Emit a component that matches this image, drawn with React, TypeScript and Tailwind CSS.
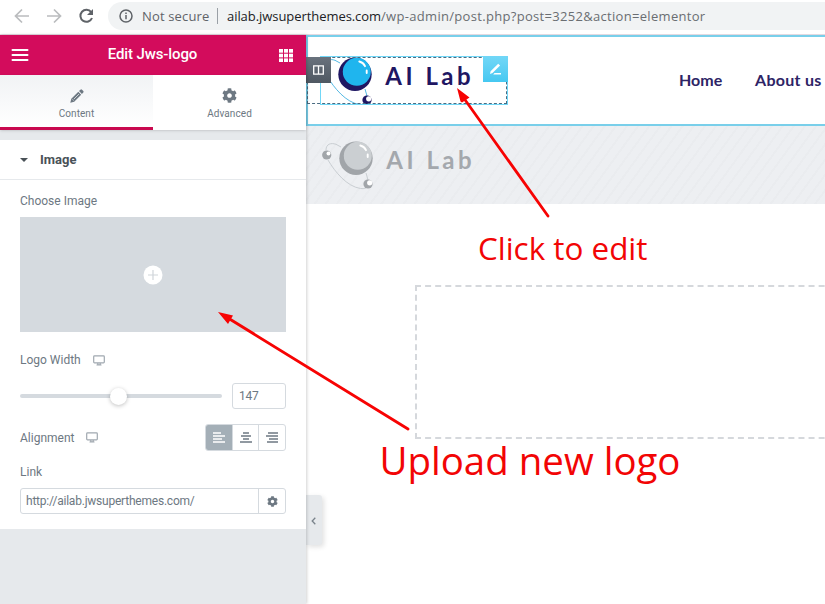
import type { ReactNode } from 'react';

type LogoColors = { dark: string; light: string; line: string; text: string; shine: string };

const brand: LogoColors = { dark: '#1f1763', light: '#1fb5ee', line: '#55b9e3', text: '#1f1763', shine: '#ffffff' };
const muted: LogoColors = { dark: '#a1a5a9', light: '#cbcfd2', line: '#c9ced2', text: '#a4a8ad', shine: '#ffffff' };

function Logo({ c }: { c: LogoColors }) {
  return (
    <svg width="152" height="50" viewBox="0 0 152 50" className="block shrink-0">
      <g fill="none" stroke={c.line} strokeWidth="1">
        <path d="M5 10C5 4 10 2.500 15 4.300L20 7M7 20C14 32 26 46.500 39.500 48.500Q42 49 45 48M45 33L47 40" />
      </g>
      <circle cx="5.700" cy="15" r="4.600" fill={c.dark} />
      <circle cx="7.500" cy="13.500" r="2" fill={c.shine} />
      <circle cx="35" cy="18.300" r="16.700" fill={c.dark} />
      <circle cx="36.800" cy="15.800" r="14" fill={c.light} />
      <path d="M39.300 5.500Q43.300 6.500 45 10.200M46.700 14.500V17" fill="none" stroke={c.shine} strokeWidth="1.900" strokeLinecap="round" />
      <circle cx="47" cy="44" r="4.600" fill={c.dark} />
      <circle cx="48.700" cy="42.800" r="2.600" fill={c.shine} />
      <text x="65.200" y="28.800" textLength="85.500" lengthAdjust="spacing" fontSize="24" fontWeight="700" fill={c.text} fontFamily="Lato, sans-serif">
        AI Lab
      </text>
    </svg>
  );
}

function Monitor() {
  return (
    <svg width="12" height="11" viewBox="0 0 12 11" fill="none" stroke="#a0a8b0" strokeWidth="1.200" className="shrink-0">
      <rect x="0.700" y="0.900" width="10.600" height="7" rx="0.800" />
      <path d="M4.800 8v1.800h2.400V8M3.500 10h5" />
    </svg>
  );
}

function Gear({ size }: { size: number }) {
  return (
    <svg width={size} height={size} viewBox="0 0 512 512" fill="#6d7882">
      <path d="M487.400 315.700l-42.600-24.600c4.300-23.200 4.300-47 0-70.200l42.600-24.600c4.900-2.800 7.100-8.600 5.500-14-11.100-35.600-30-67.800-54.700-94.600-3.800-4.100-10-5.100-14.800-2.300L380.800 110c-17.900-15.400-38.500-27.300-60.800-35.100V25.800c0-5.600-3.900-10.500-9.400-11.700-36.700-8.200-74.300-7.800-109.200 0-5.500 1.200-9.400 6.100-9.400 11.700V75c-22.200 7.900-42.800 19.800-60.800 35.100L88.700 85.500c-4.900-2.800-11-1.900-14.800 2.300-24.700 26.700-43.600 58.900-54.700 94.600-1.700 5.400.6 11.200 5.500 14L67.300 221c-4.300 23.200-4.300 47 0 70.200l-42.600 24.600c-4.900 2.800-7.100 8.600-5.500 14 11.100 35.600 30 67.800 54.700 94.600 3.800 4.100 10 5.100 14.800 2.300l42.600-24.600c17.900 15.400 38.500 27.300 60.800 35.100v49.200c0 5.600 3.900 10.500 9.400 11.700 36.700 8.200 74.300 7.800 109.200 0 5.500-1.200 9.400-6.100 9.400-11.700v-49.200c22.200-7.900 42.800-19.800 60.800-35.100l42.600 24.600c4.900 2.800 11 1.900 14.800-2.300 24.700-26.700 43.600-58.900 54.700-94.600 1.500-5.500-.7-11.300-5.600-14.100zM256 336c-44.100 0-80-35.900-80-80s35.900-80 80-80 80 35.900 80 80-35.900 80-80 80z" />
    </svg>
  );
}

function BrowserBar() {
  return (
    <div className="flex h-[34px] items-start bg-white font-['Open_Sans',sans-serif] text-[13px]">
      <svg width="108" height="34" viewBox="0 0 108 34" fill="none" strokeWidth="1.700" className="shrink-0">
        <path d="M29 16H16M22 9.500L15.500 16L22 22.500M47 16h13M54 9.500L60.500 16L54 22.500" stroke="#babcbe" />
        <path d="M91.200 12.200A6 6 0 1 0 92 18" stroke="#5f6368" strokeWidth="2" />
        <path d="M93 9v6h-6z" fill="#5f6368" />
      </svg>
      <div className="mt-[2px] flex h-[28px] flex-1 items-center rounded-l-full bg-[#f1f3f4] pl-[11px]">
        <svg width="14" height="14" viewBox="0 0 14 14" fill="none" stroke="#5f6368" strokeWidth="1.500" className="shrink-0">
          <circle cx="7" cy="7" r="6" />
          <path d="M7 6v4.300M7 3.500v1.500" />
        </svg>
        <span className="ml-[9px] w-[68px] pt-px whitespace-nowrap tracking-[0.150px] text-[#5f6368]">Not secure</span>
        <span className="ml-[7px] h-4 w-px bg-[#9aa0a6]" />
        <span className="ml-[9px] pt-px whitespace-nowrap tracking-[0.310px] text-[#6a6e72]">
          <span className="tracking-[-0.060px] text-[#202124]">ailab.jwsuperthemes.com</span>/wp-admin/post.php?post=3252&amp;action=elementor
        </span>
      </div>
    </div>
  );
}

function Tab({ label, active, children }: { label: string; active?: boolean; children: ReactNode }) {
  return (
    <div
      className={
        active
          ? 'flex flex-1 flex-col items-center border-b-[3px] border-[#c9094f] bg-gradient-to-b from-[#f1f3f5] to-white pt-[13px]'
          : 'flex flex-1 flex-col items-center border-b-[3px] border-white bg-white pt-[13px]'
      }
    >
      <div className="flex h-[15px] items-center">{children}</div>
      <div className="mt-[4px] text-[10px] leading-[14px] tracking-[0.080px] text-[#6d7882]">{label}</div>
    </div>
  );
}

const alignRows = [
  ['M0 1h8M0 4h12M0 7h9M0 10h12', 'bg-[#a4afb7]', '#ffffff'],
  ['M3 1h6M1 4h10M3 7h6M0 10h12', 'border-l border-[#d5dadf]', '#6d7882'],
  ['M2 1h10M0 4h12M3 7h9M1 10h11', 'border-l border-[#d5dadf]', '#6d7882'],
];

function Panel() {
  return (
    <aside className="z-10 flex w-[306px] shrink-0 flex-col bg-[#e6e9ec] font-[Roboto,sans-serif] text-[12px] text-[#6d7882] shadow-[1px_0_3px_rgba(0,0,0,0.18)]">
      <header className="flex h-10 items-center justify-between bg-[#d30c5c] pl-[11px] pr-[13px] text-white">
        <svg width="18" height="12" viewBox="0 0 18 12" stroke="#ffffff" strokeWidth="2" strokeLinecap="round">
          <path d="M1.500 1h15M1.500 6h15M1.500 11h15" />
        </svg>
        <h1 className="mr-[3px] pb-px text-[15px] font-medium tracking-[-0.120px]">Edit Jws-logo</h1>
        <svg width="14" height="13" viewBox="0 0 14 13" fill="#ffffff">
          {[0, 5, 10].map((y) => [0, 5, 10].map((x) => <rect key={`${x}-${y}`} x={x} y={y * 0.940} width="4" height="3.700" />))}
        </svg>
      </header>
      <div className="flex h-[55px] shadow-sm">
        <Tab label="Content" active>
          <svg width="14" height="14" viewBox="0 0 14 14" fill="#6d7882">
            <path d="M10.400.7q.8-.7 1.600 0l1.300 1.300q.7.800 0 1.600L11.900 5 9 2.100zM8.300 2.800L11.200 5.700 4.200 12.700.3 13.700 1.300 9.800z" />
            <path d="M9 5L3.800 10.200M2.500 10.500l1 1" stroke="#f8f9fa" strokeWidth="0.700" />
          </svg>
        </Tab>
        <Tab label="Advanced">
          <Gear size={15} />
        </Tab>
      </div>
      <section className="mt-[10px] h-[389px] bg-white">
        <h2 className="flex h-10 items-center border-b border-[#e6e9ec] pl-5 text-[13px] font-bold text-[#495157]">
          <span className="mr-[12px] border-x-4 border-t-4 border-x-transparent border-t-[#495157]" />
          Image
        </h2>
        <div className="px-5">
          <div className="pt-[13px] leading-4">Choose Image</div>
          <div className="mt-[8px] flex h-[115px] items-center justify-center bg-[#d5dadf]">
            <svg width="20" height="20" viewBox="0 0 20 20">
              <circle cx="10" cy="10" r="9.500" fill="#ffffff" />
              <path d="M10 5v10M5 10h10" stroke="#d0d5da" strokeWidth="1.200" />
            </svg>
          </div>
          <div className="mt-[20px] flex items-center gap-[12px] leading-4">
            Logo Width
            <Monitor />
          </div>
          <div className="mt-[15px] flex items-center gap-[10px]">
            <div className="flex h-1 flex-1 items-center rounded-full bg-[#d5dadf]">
              <div className="ml-[90px] size-[17px] rounded-full bg-white shadow-[0_1px_4px_rgba(0,0,0,0.25)]" />
            </div>
            <div className="flex h-[26px] w-[54px] items-center rounded-[3px] border border-[#d5dadf] pl-[6px] tracking-[-0.250px]">147</div>
          </div>
          <div className="mt-[15px] flex items-center justify-between">
            <div className="flex items-center gap-[12px]">
              Alignment
              <Monitor />
            </div>
            <div className="flex h-[27px] w-[81px] overflow-hidden rounded-[3px] border border-[#d5dadf]">
              {alignRows.map(([d, cell, color]) => (
                <div key={d} className={`flex flex-1 items-center justify-center ${cell}`}>
                  <svg width="12" height="11" viewBox="0 0 12 11" stroke={color} strokeWidth="1.300">
                    <path d={d} />
                  </svg>
                </div>
              ))}
            </div>
          </div>
          <div className="mt-[13px] leading-4">Link</div>
          <div className="mt-[8px] flex h-[26px] rounded-[3px] border border-[#d5dadf]">
            <div className="flex flex-1 items-center pl-[5px] tracking-[-0.220px]">http://ailab.jwsuperthemes.com/</div>
            <div className="flex w-[27px] items-center justify-center border-l border-[#d5dadf]">
              <Gear size={11} />
            </div>
          </div>
        </div>
      </section>
    </aside>
  );
}

function Preview() {
  return (
    <main className="relative min-w-0 flex-1 overflow-hidden bg-white">
      <div className="flex h-[91px] border-y-2 border-l-2 border-[#79cfea]">
        <div className="relative mt-[19px] h-[49px] w-[200px] shrink-0">
          <div className="ml-[12px] h-[49px] w-[188px] overflow-hidden border border-[#71d7f7]">
            <div className="-mt-[1px] -ml-px">
              <Logo c={brand} />
            </div>
          </div>
          <div className="absolute top-[1px] -left-px h-[47px] w-[200px] border border-dashed border-[#4b6c82]" />
          <div className="absolute top-[1px] -left-[2px] flex h-[26px] w-[25px] items-center justify-center bg-gradient-to-b from-[#69727d] to-[#4f5862]">
            <svg width="11" height="10" viewBox="0 0 11 10" fill="none" stroke="#ffffff" strokeWidth="1.300">
              <path d="M.7.800h9.600v8.400H.7zM5.500.800v8.400" />
            </svg>
          </div>
          <div className="absolute top-0 right-0 flex h-[26px] w-[25px] items-center justify-center bg-gradient-to-b from-[#71d7f7] to-[#45c8f1]">
            <svg width="13" height="13" viewBox="0 0 13 13" fill="#ffffff">
              <path d="M9.200.7l1.900 1.900-7.600 7.500L1 11l.6-2.800zM5.500 10h6.500v1.400H4.200z" />
            </svg>
          </div>
        </div>
        <nav className="mt-[31px] ml-[171px] flex h-6 items-center font-[Lato,sans-serif] text-[16px] font-bold text-[#2d2465]">
          <span className="w-[76px] shrink-0 whitespace-nowrap">Home</span>
          <span className="whitespace-nowrap tracking-[0.300px]">About us</span>
        </nav>
      </div>
      <div className="h-[78px] bg-[#edeff2] bg-[repeating-linear-gradient(-54deg,transparent_0_7px,#eaecef_7px_9px)] pt-[14px] pl-[15px]">
        <Logo c={muted} />
      </div>
      <div className="mt-[81px] ml-[109px] h-[154px] w-[450px] border-2 border-dashed border-[#d5d8dc]" />
      <button className="absolute top-[460px] left-0 flex h-[50px] w-[16px] items-center justify-center rounded-r-[3px] bg-[#e6e9ec] pt-[2px] pr-[2px] shadow-[2px_2px_5px_rgba(0,0,0,0.12)]">
        <svg width="5" height="8" viewBox="0 0 5 8" fill="none" stroke="#7a838b" strokeWidth="1.300">
          <path d="M4.300.8L1.200 4l3.100 3.200" />
        </svg>
      </button>
    </main>
  );
}

function Annotations() {
  return (
    <svg width="825" height="604" viewBox="0 0 825 604" className="pointer-events-none absolute inset-0 z-20">
      <g stroke="#f70303" strokeWidth="2.800" strokeLinecap="round">
        <path d="M548 216L463 97M408 429L228 318" />
      </g>
      <path d="M457 88L469.500 97.500L462 102.500L460.500 101.500zM218 312L233 315.500L228 324z" fill="#f70303" />
      <g fill="#f20505" fontFamily="'Open Sans', sans-serif">
        <text x="478" y="260" fontSize="31.500" textLength="169.500" lengthAdjust="spacingAndGlyphs">Click to edit</text>
        <text x="379.500" y="475" fontSize="39" textLength="301" lengthAdjust="spacingAndGlyphs">Upload new logo</text>
      </g>
    </svg>
  );
}

export default function App() {
  return (
    <div className="relative flex h-[604px] w-[825px] flex-col overflow-hidden bg-white">
      <BrowserBar />
      <div className="flex min-h-0 flex-1 border-t border-[#e4d9e0]">
        <Panel />
        <Preview />
      </div>
      <Annotations />
    </div>
  );
}
